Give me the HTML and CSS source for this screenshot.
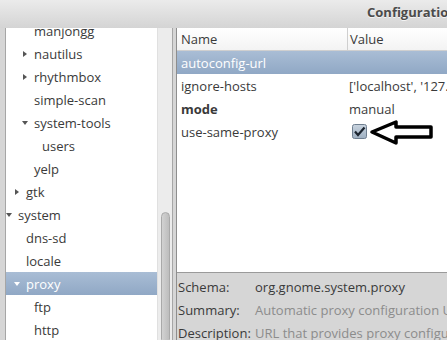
FILE: index.html
```html
<!DOCTYPE html>
<html lang="en">
<head>
  <meta charset="UTF-8" />
  <title>Configuration Editor</title>
  <link rel="stylesheet" href="styles.css">
</head>
<body>

<div class="window">
  <div class="titlebar">
    <svg class="menu-arrow" width="8" height="5" viewBox="0 0 8 5"><polygon points="0,0 8,0 4,5" fill="#6b6b6b"/></svg>
    <span class="title">Configuration Editor</span>
  </div>

  <div class="main">
    <!-- schema tree -->
    <div class="sidebar">
      <div class="tree">
        <ul class="tree-list">
          <li class="lvl2"><span class="exp"></span>manjongg</li>
          <li class="lvl2"><span class="exp closed"></span>nautilus</li>
          <li class="lvl2"><span class="exp closed"></span>rhythmbox</li>
          <li class="lvl2"><span class="exp"></span>simple-scan</li>
          <li class="lvl2"><span class="exp open"></span>system-tools</li>
          <li class="lvl3"><span class="exp"></span>users</li>
          <li class="lvl2"><span class="exp"></span>yelp</li>
          <li class="lvl1"><span class="exp closed"></span>gtk</li>
          <li class="lvl0"><span class="exp open"></span>system</li>
          <li class="lvl1"><span class="exp"></span>dns-sd</li>
          <li class="lvl1"><span class="exp"></span>locale</li>
          <li class="lvl1 selected"><span class="exp open"></span>proxy</li>
          <li class="lvl2"><span class="exp"></span>ftp</li>
          <li class="lvl2"><span class="exp"></span>http</li>
        </ul>
      </div>
      <div class="scrollbar"><div class="thumb"></div></div>
    </div>

    <!-- keys of the selected schema -->
    <div class="content">
      <div class="keys">
        <div class="keys-head">
          <div class="col-name">Name</div>
          <div class="col-value">Value</div>
        </div>
        <div class="key selected">
          <div class="col-name">autoconfig-url</div>
          <div class="col-value"></div>
        </div>
        <div class="key">
          <div class="col-name">ignore-hosts</div>
          <div class="col-value">['localhost', '127.0.0.0/8']</div>
        </div>
        <div class="key">
          <div class="col-name bold">mode</div>
          <div class="col-value">manual</div>
        </div>
        <div class="key">
          <div class="col-name">use-same-proxy</div>
          <div class="col-value">
            <svg class="check" width="15" height="15" viewBox="0 0 15 15">
              <defs>
                <linearGradient id="cb" x1="0" y1="0" x2="0" y2="1">
                  <stop offset="0" stop-color="#c9d4df"/>
                  <stop offset="1" stop-color="#9fb0c2"/>
                </linearGradient>
              </defs>
              <rect x="0.5" y="0.5" width="14" height="14" rx="2" fill="url(#cb)" stroke="#6f7f90"/>
              <path d="M3 7.5 L6 11 L12.5 3.5" fill="none" stroke="#1c2530" stroke-width="2.2"/>
            </svg>
            <svg class="pointer" width="66" height="26" viewBox="0 0 66 26">
              <polygon points="3,13 27,3 27,8 62,8 62,18 27,18 27,24" fill="#fff" stroke="#000" stroke-width="3.5" stroke-linejoin="round"/>
            </svg>
          </div>
        </div>
      </div>

      <div class="info">
        <div class="info-row"><span class="info-label">Schema:</span><span class="info-value">org.gnome.system.proxy</span></div>
        <div class="info-row"><span class="info-label">Summary:</span><span class="info-value muted">Automatic proxy configuration URL</span></div>
        <div class="info-row"><span class="info-label">Description:</span><span class="info-value muted">URL that provides proxy configuration values.</span></div>
      </div>
    </div>
  </div>
</div>

</body>
</html>
```

FILE: styles.css
```css
body {
  margin: 0;
  font-family: "Open Sans", "DejaVu Sans", sans-serif;
  font-size: 13px;
  color: #3a3a3a;
}
.window {
  width: 447px;
  height: 340px;
  overflow: hidden;
  background-color: #d6d6d6;
  display: flex;
  flex-direction: column;
}
.titlebar {
  height: 28px;
  flex: none;
  display: flex;
  align-items: center;
  background: linear-gradient(#ebebeb, #d4d4d4);
  white-space: nowrap;
  overflow: hidden;
}
.menu-arrow {
  margin-left: 9px;
  margin-top: -5px;
}
.title {
  margin-left: 358px;
  margin-top: -4px;
  font-weight: bold;
  color: #4b4b4b;
  text-shadow: 0 1px 0 #f4f4f4;
}
.main {
  flex: 1;
  display: flex;
  min-height: 0;
}
.sidebar {
  width: 166px;
  margin-left: 5px;
  border-left: 1px solid #a6a6a6;
  border-right: 1px solid #a6a6a6;
  background: white;
  display: flex;
}
.tree {
  flex: 1;
  overflow: hidden;
}
.tree-list {
  list-style: none;
  margin: -9px 0 0;
  padding: 0;
}
.tree-list li {
  height: 23px;
  display: flex;
  align-items: center;
  white-space: nowrap;
}
.tree-list .lvl0 { padding-left: 0; }
.tree-list .lvl1 { padding-left: 8px; }
.tree-list .lvl2 { padding-left: 16px; }
.tree-list .lvl3 { padding-left: 24px; }
.exp {
  width: 12px;
  height: 23px;
  flex: none;
  position: relative;
}
.exp.closed::before {
  content: "";
  position: absolute;
  left: 1px;
  top: 9px;
  border-left: 4px solid #555;
  border-top: 3px solid transparent;
  border-bottom: 3px solid transparent;
}
.exp.open::before {
  content: "";
  position: absolute;
  left: 0;
  top: 10px;
  border-top: 4px solid #555;
  border-left: 3px solid transparent;
  border-right: 3px solid transparent;
}
.tree-list li.selected {
  background: linear-gradient(#a9bdd5, #90a8c5);
  color: white;
}
.tree-list li.selected .exp::before {
  border-top-color: white;
}
.scrollbar {
  width: 14px;
  flex: none;
  background-color: #ececec;
  border-left: 1px solid #e0e0e0;
  position: relative;
}
.thumb {
  position: absolute;
  left: 3px;
  top: 184px;
  bottom: -4px;
  width: 7px;
  background: linear-gradient(90deg, #d2d2d2, #bdbdbd);
  border: 1px solid #a9a9a9;
  border-radius: 5px;
}
.content {
  flex: 1;
  margin-left: 3px;
  border-left: 1px solid #8e8e8e;
  display: flex;
  flex-direction: column;
  min-width: 0;
}
.keys {
  height: 244px;
  flex: none;
  background: white;
  border-bottom: 1px solid #9a9a9a;
  overflow: hidden;
}
.keys-head {
  height: 22px;
  display: flex;
  align-items: center;
  border-bottom: 1px solid #cfcfcf;
  background: linear-gradient(#ffffff, #f3f3f3);
}
.keys-head .col-name {
  border-right: 1px solid #cfcfcf;
  height: 22px;
  line-height: 22px;
}
.keys-head .col-value {
  padding-left: 2px;
}
.key {
  height: 23px;
  display: flex;
  align-items: center;
  white-space: nowrap;
}
.col-name {
  width: 166px;
  flex: none;
  padding-left: 4px;
}
.col-value {
  flex: 1;
  padding-left: 2px;
  display: flex;
  align-items: center;
  overflow: hidden;
}
.bold {
  font-weight: bold;
}
.key.selected {
  background: linear-gradient(#a9bdd5, #90a8c5);
  color: white;
}
.check {
  flex: none;
  margin-left: 3px;
}
.pointer {
  flex: none;
  margin-left: 2px;
}
.info {
  flex: 1;
  padding-top: 2px;
  background-color: #d6d6d6;
}
.info-row {
  height: 23px;
  display: flex;
  align-items: center;
  white-space: nowrap;
}
.info-label {
  width: 77px;
  flex: none;
  padding-left: 1px;
}
.muted {
  color: #8c8c8c;
}
```
